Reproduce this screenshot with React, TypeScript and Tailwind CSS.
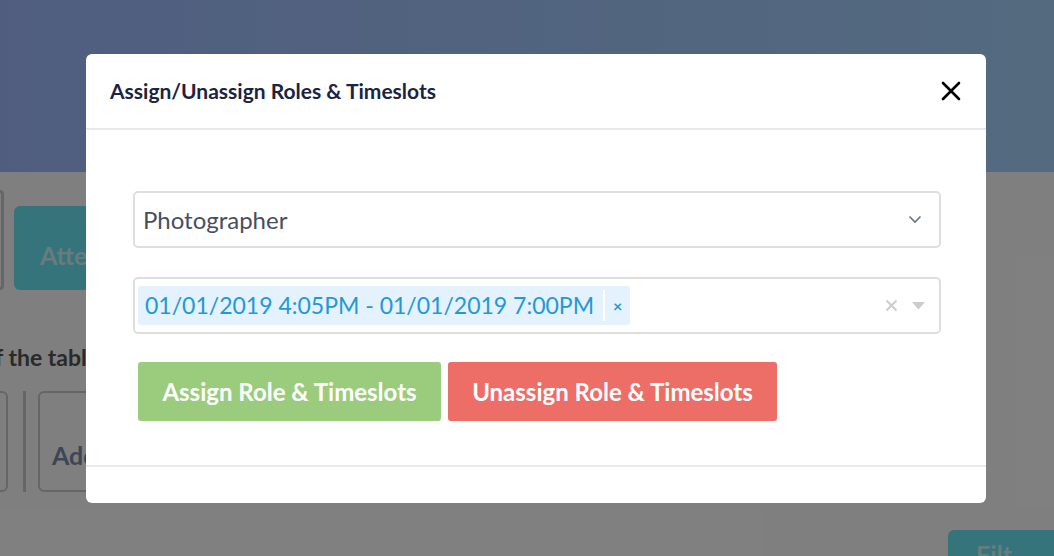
import React from "react";

const font = { fontFamily: "Lato, 'Open Sans', sans-serif" };

function Background() {
  return (
    <div className="absolute inset-0 bg-white">
      <div className="h-[172px] bg-gradient-to-r from-[#a0bbff] to-[#a7d5ff]" />
      <div className="flex items-start gap-[10px] pt-[18px] -ml-[20px]">
        <div className="w-[24px] h-[100px] border-[3px] border-[#ccc] rounded-[4px]" />
        <div className="w-[200px] h-[84px] mt-[16px] rounded-[6px] bg-[#6ae8f4] flex items-end pb-[16px] pl-[26px]">
          <span className="text-[25px] font-bold text-[#fff]/70">Attendees</span>
        </div>
      </div>
      <div className="mt-[56px] -ml-[5px] text-[23px] font-bold text-[#555] leading-none">f the table</div>
      <div className="flex items-stretch mt-[22px] -ml-[30px] h-[101px]">
        <div className="w-[38px] border-[2px] border-[#ccc] rounded-[6px]" />
        <div className="w-[3px] bg-[#ccc] ml-[15px]" />
        <div className="ml-[12px] w-[180px] border-[2px] border-[#ccc] rounded-[6px] flex items-end pb-[16px] pl-[12px]">
          <span className="text-[25px] font-bold text-[#7a8cac]">Add</span>
        </div>
      </div>
      <div className="absolute left-[948px] top-[530px] w-[120px] h-[50px] rounded-[6px] bg-[#6ae8f4] pl-[28px] pt-[6px]">
        <span className="text-[25px] font-bold text-white/70">Filt</span>
      </div>
    </div>
  );
}

function Chevron() {
  return (
    <svg width="14" height="9" viewBox="0 0 14 9" fill="none">
      <path d="M1.5 1.5 L7 7 L12.5 1.5" stroke="#6b7280" strokeWidth="1.6" />
    </svg>
  );
}

export default function App() {
  return (
    <div className="relative w-full h-[556px] overflow-hidden" style={font}>
      <Background />
      <div className="absolute inset-0 bg-black/50" />
      <div className="absolute left-[86px] top-[54px] w-[900px] h-[449px] bg-white rounded-[6px] flex flex-col">
        <div className="h-[76px] border-b-2 border-[#e9e9e9] flex items-center justify-between pl-[24px] pr-[25px]">
          <h2 className="text-[21px] font-bold text-[#1b2440] leading-none pb-[2px]">
            Assign/Unassign Roles &amp; Timeslots
          </h2>
          <svg width="20" height="20" viewBox="0 0 20 20" className="-mt-[1px]">
            <path d="M2 2 L18 18 M18 2 L2 18" stroke="#000" strokeWidth="2.6" strokeLinecap="round" />
          </svg>
        </div>
        <div className="flex-1 pl-[47px] pr-[45px] pt-[61px] border-b-2 border-[#e9e9e9]">
          <div className="h-[57px] border-2 border-[#dedede] rounded-[5px] flex items-center justify-between pl-[8px] pr-[17px]">
            <span className="text-[24px] text-[#474f5c]">Photographer</span>
            <Chevron />
          </div>
          <div className="mt-[29px] h-[57px] border-2 border-[#dedede] rounded-[5px] flex items-center justify-between pl-[3px] pr-[14px]">
            <div className="h-[39px] bg-[#e3f2fd] rounded-[3px] flex items-center text-[#2398d8]">
              <span className="text-[23px] pl-[7px] pr-[9px]">01/01/2019 4:05PM - 01/01/2019 7:00PM</span>
              <span className="w-[2px] h-[31px] bg-white" />
              <span className="px-[8px] text-[16px] font-bold leading-none">×</span>
            </div>
            <div className="flex items-center gap-[14px]">
              <svg width="13" height="13" viewBox="0 0 13 13">
                <path d="M1.5 1.5 L11.5 11.5 M11.5 1.5 L1.5 11.5" stroke="#cccccc" strokeWidth="2" />
              </svg>
              <svg width="13" height="8" viewBox="0 0 13 8">
                <path d="M0 0 H13 L6.5 7.5 Z" fill="#cccccc" />
              </svg>
            </div>
          </div>
          <div className="mt-[28px] pl-[5px] flex gap-[7px]">
            <button className="h-[59px] w-[303px] rounded-[3px] bg-[#9bcc7d] text-white text-[24px] font-bold">
              Assign Role &amp; Timeslots
            </button>
            <button className="h-[59px] w-[329px] rounded-[3px] bg-[#ed6d67] text-white text-[24px] font-bold">
              Unassign Role &amp; Timeslots
            </button>
          </div>
        </div>
        <div className="h-[36px]" />
      </div>
    </div>
  );
}
